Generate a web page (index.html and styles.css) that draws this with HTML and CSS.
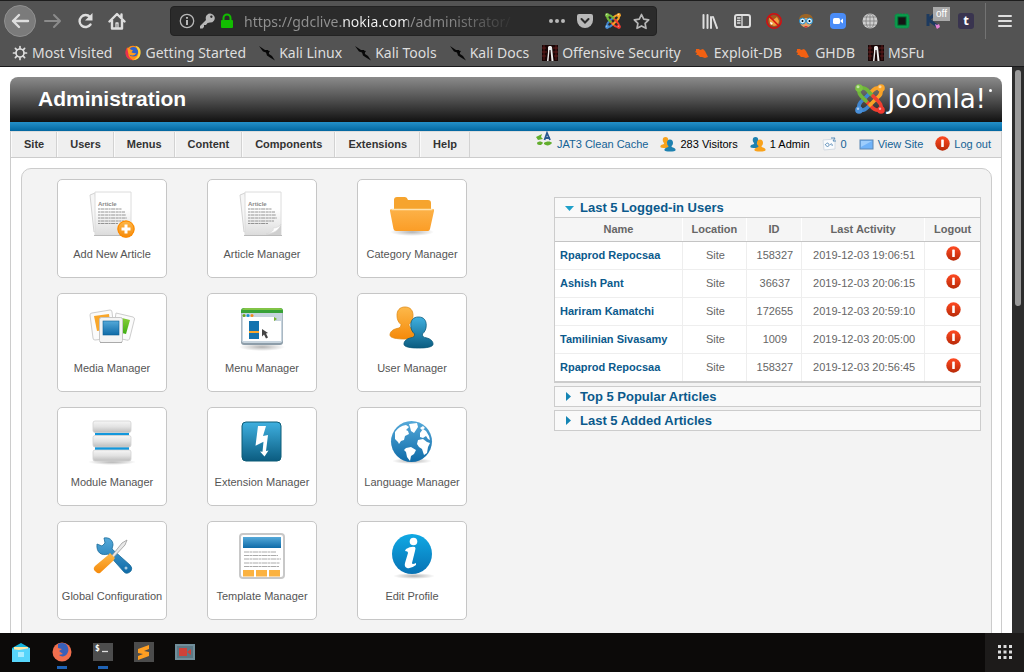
FILE: index.html
```html
<!DOCTYPE html>
<html lang="en">
<head>
<meta charset="utf-8">
<title>Administration</title>
<link rel="stylesheet" href="styles.css">
</head>
<body>
<svg class="defs" width="0" height="0" aria-hidden="true">
  <defs>
    <linearGradient id="gBlue" x1="0" y1="0" x2="0" y2="1"><stop offset="0" stop-color="#3fb0e0"/><stop offset="1" stop-color="#0b5c80"/></linearGradient>
    <linearGradient id="gSky" x1="0" y1="0" x2="0" y2="1"><stop offset="0" stop-color="#55a9d9"/><stop offset="1" stop-color="#0f6ba8"/></linearGradient>
    <linearGradient id="gInfo" x1="0" y1="0" x2="0" y2="1"><stop offset="0" stop-color="#10a9e4"/><stop offset="1" stop-color="#0872b4"/></linearGradient>
    <linearGradient id="gOrange" x1="0" y1="0" x2="0" y2="1"><stop offset="0" stop-color="#fdb94b"/><stop offset="1" stop-color="#f58a0a"/></linearGradient>
    <linearGradient id="gFold" x1="0" y1="0" x2="0" y2="1"><stop offset="0" stop-color="#fcb249"/><stop offset="1" stop-color="#fb9d26"/></linearGradient>
    <linearGradient id="gRed" x1="0" y1="0" x2="0" y2="1"><stop offset="0" stop-color="#ff4a22"/><stop offset="1" stop-color="#b82a08"/></linearGradient>
    <linearGradient id="gPaper" x1="0" y1="0" x2="0" y2="1"><stop offset="0.4" stop-color="#fff"/><stop offset="1" stop-color="#dcdcdc"/></linearGradient>
    <linearGradient id="gSilver" x1="0" y1="0" x2="0" y2="1"><stop offset="0" stop-color="#f6f6f6"/><stop offset="0.5" stop-color="#e2e2e2"/><stop offset="1" stop-color="#bdbdbd"/></linearGradient>
    <linearGradient id="gGreen" x1="0" y1="0" x2="0" y2="1"><stop offset="0" stop-color="#8ccf3c"/><stop offset="1" stop-color="#3fae12"/></linearGradient>
    <radialGradient id="gShade"><stop offset="0" stop-color="#000" stop-opacity=".3"/><stop offset="1" stop-color="#000" stop-opacity="0"/></radialGradient>
    <symbol id="joomla" viewBox="0 0 30 30">
      <g fill="none" stroke-width="3.700" stroke-linecap="round">
        <path stroke="#3f86cf" d="M4 26C3 21 5 18 8 16L15 9M4 26C9 27 11 25 14 22L15 21"/>
        <path stroke="#f0402f" d="M26 26C21 27 18 25 16 22L9 15M26 26C27 21 25 19 22 16L21 15"/>
        <path stroke="#f9a226" d="M26 4C27 9 25 12 22 14L15 21M26 4C21 3 19 5 16 8L15 9"/>
        <path stroke="#6fb63a" d="M4 4C3 9 5 11 8 14L11 17M4 4C9 3 12 5 14 8L17 11"/>
        <path stroke="#f0402f" d="M22 16L18 12"/>
      </g>
      <circle cx="4" cy="4" r="3.800" fill="#7cc243"/><circle cx="26" cy="4" r="3.800" fill="#fba62b"/><circle cx="26" cy="26" r="3.800" fill="#f23a30"/><circle cx="4" cy="26" r="3.800" fill="#4a90d9"/>
      <g fill="#fff" fill-opacity=".55"><circle cx="3" cy="2.800" r="1.500"/><circle cx="25" cy="2.800" r="1.500"/><circle cx="25" cy="24.800" r="1.200"/><circle cx="3" cy="24.800" r="1.200"/></g>
    </symbol>
    <symbol id="stop" viewBox="0 0 15 15"><circle cx="7.500" cy="7.500" r="7.200" fill="url(#gRed)"/><rect x="6.200" y="3.500" width="2.600" height="7.600" rx="0.600" fill="#fff"/></symbol>
    <symbol id="person" viewBox="0 0 32 34"><path d="M16 1c5.500 0 8 3.500 8 8.500 0 4-1.500 7-4 9 0 2.500 1 3.500 4 4 4.500 1 7 3.500 7 6.500 0 3-7 4-15 4S1 32 1 29c0-3 2.500-5.500 7-6.500 3-.5 4-1.500 4-4-2.500-2-4-5-4-9C8 4.500 10.500 1 16 1z"/></symbol>
    <symbol id="kali" viewBox="0 0 16 16"><path fill="#080808" d="M0 1l6 4 3 0 1 4 3 2 3 4.500-5-3-3-2-1-3-3-1z"/><path fill="#080808" d="M5 5l6 1-2 3z"/></symbol>
    <symbol id="offsec" viewBox="0 0 16 16"><path fill="#180606" d="M0 0h16v16H0z"/><path stroke="#5c1b1b" d="M0 3h4M0 7h5M0 11h4M11 3h5M11 7h5M12 11h4M2 0v15M14 0v15"/><path fill="#eee" d="M6 2l1-1h2l1 1 .5 5 1 9H9.500L8.500 5 7.500 5 6.500 16H5L6 7z"/></symbol>
    <symbol id="bug" viewBox="0 0 16 16"><path fill="#f26012" d="M2 4l3 0 1 1 3-1 2 2 1 2 2 4-3 1-3-1-2 0-2-2-2 0 1-2-2-1 1-1z"/></symbol>
    <symbol id="fox" viewBox="0 0 20 20"><circle cx="10" cy="10" r="9" fill="#ff8c18"/><circle cx="10.500" cy="8.500" r="6" fill="#2f62c9"/><path fill="#ff9a1c" d="M3 3c-1 4 1 10 6 10 3 0 4-1 5-3-2 1-4 0-6-1l2-2-4-2z"/><path fill="#ffd33d" d="M13 1c5 1 7 5 6.500 9-.5 6-5 9-10 9 5-2 8-6 7-11-.5-3-2-5-3.500-7z"/><path fill="#e8304c" d="M2.500 3c-5 8 0 16 7.500 16-4-2-6-5-6-9z"/></symbol>
    <symbol id="paper" viewBox="0 0 48 48">
      <path d="M2 5l5-2 4 37-5 2z" fill="#f6f6f6" stroke="#d4d4d4"/>
      <path d="M7 2h36v43H7z" fill="url(#gPaper)" stroke="#dcdcdc"/><path d="M6 45.500h38" stroke="#bbb"/>
      <text class="paper-title" x="10" y="16">Article</text>
      <path d="M10 19h24M10 22h27M10 25h28M10 28h29M10 31h26M10 33.500h20" stroke="#888" stroke-width=".9" stroke-dasharray="2 .5 4 .6 3 .5"/>
    </symbol>
  </defs>
</svg>

<header class="browser">
  <div class="toolbar">
    <button class="tool back" aria-label="Back"><svg width="20" height="20" viewBox="0 0 20 20"><path d="M18 10H3M9 4l-6 6 6 6" class="line bold"/></svg></button>
    <button class="tool dim" aria-label="Forward"><svg width="20" height="20" viewBox="0 0 20 20"><path d="M2 10h14M11 4l6 6-6 6" class="line"/></svg></button>
    <button class="tool" aria-label="Reload"><svg width="18" height="18" viewBox="0 0 18 18"><path d="M14.500 12.500A6 6 0 1 1 14 5" class="line bold"/><path d="M16.500 1v7.500H9z" fill="currentColor"/></svg></button>
    <button class="tool" aria-label="Home"><svg width="18" height="18" viewBox="0 0 18 18"><path d="M1.500 9.500L9 2l7.500 7.500M4 8v8.500h10V8M13.500 2.500V6" class="line bold"/><path d="M8 16v-5h2v5" class="line thin"/></svg></button>
    <div class="urlbar">
      <button class="small" aria-label="Site information"><svg width="16" height="16" viewBox="0 0 16 16"><circle cx="8" cy="8" r="6.700" class="line thin"/><path d="M7 7h2v5H7zM7 4h2v1.800H7z" fill="currentColor"/></svg></button>
      <button class="small" aria-label="Saved login"><svg width="16" height="16" viewBox="0 0 16 16"><path fill="currentColor" fill-rule="evenodd" d="M8 2a4.500 4.500 0 1 1 3 7.600L8.600 10 7 12H5v2l-1.500 1.500H1V13l6-6c-.6-2-.2-4 1-5zm4.300.5a1.200 1.200 0 1 0 .1 2.400 1.200 1.200 0 0 0-.1-2.400z"/></svg></button>
      <button class="small lock" aria-label="Secure connection"><svg width="14" height="16" viewBox="0 0 14 16"><path d="M3.500 8V5a3.500 3.500 0 0 1 7 0v3" fill="none" stroke="currentColor" stroke-width="2"/><rect x="1" y="7" width="12" height="8" rx="1" fill="currentColor"/></svg></button>
      <input class="url" type="text" aria-label="Address" value="https://gdclive.nokia.com/administrator/">
      <button class="mid" aria-label="Page actions"><svg width="16" height="16" viewBox="0 0 16 16" fill="currentColor"><circle cx="2" cy="8" r="2"/><circle cx="8" cy="8" r="2"/><circle cx="14" cy="8" r="2"/></svg></button>
      <button class="mid" aria-label="Save to Pocket"><svg width="16" height="16" viewBox="0 0 16 16"><path d="M2 1h12a2 2 0 0 1 2 2v4a8 8 0 0 1-16 0V3a2 2 0 0 1 2-2z" fill="currentColor"/><path d="M4.500 6L8 9.500 11.500 6" fill="none" stroke="#2b2b2b" stroke-width="2" stroke-linecap="round"/></svg></button>
      <button class="mid" aria-label="Joomla extension"><svg width="16" height="16"><use href="#joomla"/></svg></button>
      <button class="mid" aria-label="Bookmark this page"><svg width="17" height="17" viewBox="0 0 17 17"><path d="M8.500 1.500l2.200 4.600 5 .7-3.600 3.500.9 5-4.500-2.400L4 15.300l.9-5L1.300 6.800l5-.7z" class="line mids"/></svg></button>
    </div>
    <button class="tool" aria-label="Library"><svg width="16" height="16" viewBox="0 0 16 16"><path d="M1.500 2v13M5.500 2v13M9 4v11M11 4l4 11" class="line"/></svg></button>
    <button class="tool" aria-label="Sidebar"><svg width="17" height="16" viewBox="0 0 17 16"><rect x="1" y="2" width="15" height="12" rx="2" class="line"/><path d="M8 2v12M3.500 5h2.500M3.500 7.500h2.500M3.500 10h2.500" class="line thin"/></svg></button>
    <button class="tool" aria-label="Proxy disabled"><svg width="16" height="16" viewBox="0 0 16 16"><circle cx="8" cy="8" r="6" fill="#a9561d"/><path fill="#f0a041" d="M3 5l4 2 4-3 2 4-1 4-4 1-4-2z"/><path fill="#fff" d="M4 9l3 1-2 2z"/><circle cx="8" cy="8" r="7.200" fill="none" stroke="#d90d0d" stroke-width="1.500"/><path d="M3 3l10 10" stroke="#d90d0d" stroke-width="1.500"/></svg></button>
    <button class="tool" aria-label="User profile"><svg width="16" height="16" viewBox="0 0 16 16"><circle cx="8" cy="8.500" r="6" fill="#e3a468"/><path fill="#9b6426" d="M1 7c0-4 3-6 7-6s7 2 7 6l-3-2H4z"/><path d="M6 13h4l-2 2z" fill="#d33"/><circle cx="4.500" cy="8" r="3" fill="#d5f0ff" stroke="#1d89c8"/><circle cx="11.500" cy="8" r="3" fill="#d5f0ff" stroke="#1d89c8"/><circle cx="4.500" cy="8" r="1"/><circle cx="11.500" cy="8" r="1"/></svg></button>
    <button class="tool" aria-label="Meetings"><svg width="16" height="16" viewBox="0 0 16 16"><rect width="16" height="16" rx="4" fill="#4a8cf7"/><rect x="3" y="5" width="7" height="6" rx="1.500" fill="#fff"/><path d="M10.500 7.500L13 5.500v5l-2.500-2z" fill="#fff"/></svg></button>
    <button class="tool" aria-label="Globe"><svg width="16" height="16" viewBox="0 0 16 16"><circle cx="8" cy="8" r="7.500" fill="#cfcfcf"/><path d="M8 0v16M0 8h16M2 4h12M2 12h12" stroke="#7d7d7d" stroke-width=".8"/><ellipse cx="8" cy="8" rx="4" ry="7.500" fill="none" stroke="#7d7d7d" stroke-width=".8"/></svg></button>
    <button class="tool" aria-label="Chip"><svg width="16" height="16" viewBox="0 0 16 16"><rect x="1" y="1" width="14" height="14" rx="2" fill="#0a9a4b" stroke="#0b8d46" stroke-dasharray="2 1"/><rect x="4" y="4" width="8" height="8" fill="#151515" stroke="#03552a"/></svg></button>
    <button class="tool badged" aria-label="Blocker off"><svg width="16" height="16" viewBox="0 0 16 16"><path d="M2 1v12M2 7l7-6M3 7l8 6" stroke="#1d3a5f" stroke-width="3" fill="none"/><path d="M9 11l2 1 2-1 1 3-3 2-1-2z" fill="#e682d4"/></svg><span class="badge">off</span></button>
    <button class="tool" aria-label="Tumblr"><span class="tile">t</span></button>
    <span class="divider"></span>
    <button class="tool" aria-label="Menu"><svg width="14" height="16" viewBox="0 0 14 16"><path d="M1 3h12M1 8h12M1 13h12" class="line"/></svg></button>
  </div>
  <nav class="bookmarks">
    <a href="#"><svg width="16" height="16" viewBox="0 0 16 16"><circle cx="8" cy="8" r="4" class="line mids"/><path d="M8 1.500v2M8 12.500v2M1.500 8h2M12.500 8h2M3.400 3.400l1.400 1.400M11.200 11.200l1.400 1.400M3.400 12.600l1.400-1.400M11.200 4.800l1.400-1.400" class="line mids"/></svg>Most Visited</a>
    <a href="#"><svg width="16" height="16"><use href="#fox"/></svg>Getting Started</a>
    <a href="#"><svg width="16" height="16"><use href="#kali"/></svg>Kali Linux</a>
    <a href="#"><svg width="16" height="16"><use href="#kali"/></svg>Kali Tools</a>
    <a href="#"><svg width="16" height="16"><use href="#kali"/></svg>Kali Docs</a>
    <a href="#"><svg width="16" height="16"><use href="#offsec"/></svg>Offensive Security</a>
    <a href="#"><svg width="16" height="16"><use href="#bug"/></svg>Exploit-DB</a>
    <a href="#"><svg width="16" height="16"><use href="#bug"/></svg>GHDB</a>
    <a href="#"><svg width="16" height="16"><use href="#offsec"/></svg>MSFu</a>
  </nav>
</header>

<div class="viewport">
  <div class="page">
    <div class="masthead">
      <h1>Administration</h1>
      <div class="brand"><svg width="30" height="30"><use href="#joomla"/></svg><span>Joomla!</span><i></i></div>
    </div>
    <div class="stripe"></div>
    <div class="menubar">
      <nav class="menu"><a href="#">Site</a><a href="#">Users</a><a href="#">Menus</a><a href="#">Content</a><a href="#">Components</a><a href="#">Extensions</a><a href="#">Help</a></nav>
      <div class="status">
        <a href="#"><svg class="raised" width="18" height="18" viewBox="0 0 18 18"><path fill="#62ad2d" d="M1 6l6-3-1 3 2 2-5 1zM2 12c1-2 5-2 6 0l-2 2c-2 0-4 0-4-2zM9 12c2-2 7-2 8 0-2 3-6 3-8 1z"/><path d="M9.500 9l2.500-7 3 7M10 7h5" fill="none" stroke="#27568f" stroke-width="1.800"/></svg>JAT3 Clean Cache</a>
        <span><svg width="16" height="16" viewBox="0 0 16 16"><use href="#person" x="0" y="0" width="11" height="13" fill="#f9a21b"/><use href="#person" x="4" y="3" width="12" height="13" fill="#1d81b0"/></svg>283 Visitors</span>
        <span><svg width="16" height="16" viewBox="0 0 16 16"><use href="#person" x="0" y="0" width="11" height="13" fill="#1d81b0"/><use href="#person" x="4" y="3" width="12" height="13" fill="#f9a21b"/></svg>1 Admin</span>
        <a href="#"><svg width="15" height="16" viewBox="0 0 15 16"><path d="M1 4l12-1v10l-11 1z" fill="#f9fbfd" stroke="#d3dbe3"/><path d="M3 9c2-3 4-2 4 0s-3 2-3 0M8 9c1-2 3-1 2 1M9 2h4l-2 3h3" fill="none" stroke="#5b8db8"/></svg>0</a>
        <a href="#"><svg width="15" height="16" viewBox="0 0 15 16"><rect x="1" y="4" width="13" height="9" fill="#6fb2f8" stroke="#5c87b4"/><path d="M2 5h11L2 11z" fill="#9dcdfc"/></svg>View Site</a>
        <a href="#"><svg width="15" height="15"><use href="#stop"/></svg>Log out</a>
      </div>
    </div>
    <div class="body">
      <main class="panel">
        <div class="cards">
          <a class="card" href="#"><svg width="48" height="48" viewBox="0 0 48 48"><use href="#paper"/><circle cx="38" cy="39" r="8.700" fill="url(#gOrange)"/><circle cx="38" cy="39" r="8" fill="none" stroke="#ff8a00"/><path d="M38 34.500v9M33.500 39h9" stroke="#fff" stroke-width="3"/></svg>Add New Article</a>
          <a class="card" href="#"><svg width="48" height="48" viewBox="0 0 48 48"><use href="#paper"/><path d="M28 45c6-1 12-4 15-11v11z" fill="#cfcfcf"/><path d="M28 44c7-2 8-4 7-6 3 0 6-1 8-4-2 6-6 9-15 10z" fill="#fff" stroke="#d5d5d5" stroke-width=".6"/></svg>Article Manager</a>
          <a class="card" href="#"><svg width="48" height="48" viewBox="0 0 48 48"><ellipse cx="24" cy="42" rx="22" ry="4" fill="url(#gShade)"/><path d="M6 10q0-3 3-3h8q2 0 3 3h20q3 0 3 3v17H6z" fill="#f6a42e"/><path d="M4 19h41q1.500 0 1 2l-4 18q-.5 2-2 2H8q-2 0-2.500-2L2 21q-.5-2 2-2z" fill="url(#gFold)"/><path d="M3.500 19.500h41" stroke="#ffe2ad" stroke-width="1.300"/></svg>Category Manager</a>

          <a class="card" href="#"><svg width="48" height="48" viewBox="0 0 48 48"><g stroke="#cdcdcd" fill="#fbfbfb"><path d="M2 11q0-2 2-2l18-3q2 0 2 2l3 26-20 2q-2 0-2-2z"/><path d="M28 9l17 4q2 1 1.500 2l-5 20q-1 2-3 1l-14-3z"/></g><path d="M6 12l15-2 2 15-14 2z" fill="#f9a72b"/><path d="M30 13l12 3-4 14-12-3z" fill="url(#gGreen)"/><rect x="11.500" y="13.500" width="23" height="25" rx="2" fill="#f4f4f4" stroke="#c6c6c6"/><path d="M12 38.500h22" stroke="#aaa"/><rect x="15" y="17" width="16" height="14" fill="url(#gSky)" stroke="#0d6095" stroke-width=".6"/></svg>Media Manager</a>
          <a class="card" href="#"><svg width="48" height="48" viewBox="0 0 48 48"><ellipse cx="24" cy="43" rx="23" ry="4" fill="url(#gShade)"/><rect x="3" y="5" width="42" height="36" rx="3" fill="#8d9da9"/><rect x="3.500" y="5" width="41" height="34" rx="3" fill="#c7d4de"/><path d="M3 9V7q0-3 3-3h36q3 0 3 3v2z" fill="#38a238"/><path d="M4 6q1-2 3-2h34q3 0 3 2z" fill="#82c447"/><rect x="5" y="13" width="31" height="5" fill="#fff"/><circle cx="6" cy="11.500" r="1.500" fill="#6aa51c"/><circle cx="10" cy="11.500" r="1.500" fill="#188fd0"/><circle cx="14" cy="11.500" r="1.500" fill="#f28a1c"/><path d="M36 13l3 2-3 2z" fill="#77b22c"/><path d="M5 17h38v20H5z" fill="#fff"/><rect x="11" y="17" width="10" height="18" fill="#1373ae"/><rect x="11" y="27" width="10" height="2" fill="#f9a72b"/><path d="M24 25l6 4-2 .5 2 4-2 1-2-4-2 2z" fill="#444"/></svg>Menu Manager</a>
          <a class="card" href="#"><svg width="48" height="48" viewBox="0 0 48 48"><use href="#person" x="1" y="2" width="32" height="34" fill="url(#gOrange)" stroke="#e08a14" stroke-width=".8"/><use href="#person" x="14" y="12" width="33" height="33" fill="url(#gBlue)" stroke="#0b5878" stroke-width=".8"/></svg>User Manager</a>

          <a class="card" href="#"><svg width="48" height="48" viewBox="0 0 48 48"><ellipse cx="24" cy="44" rx="24" ry="3" fill="url(#gShade)"/><path d="M7 12h34v21H7z" fill="#d5d5d5"/><path d="M7 16h34M7 30.500h34" stroke="#1297dc" stroke-width="3"/><g fill="url(#gSilver)" stroke="#d2d2d2" stroke-width=".8"><rect x="5" y="3" width="38" height="11.500" rx="2"/><rect x="5" y="17.500" width="38" height="11.500" rx="2"/><rect x="5" y="32" width="38" height="11" rx="2"/></g></svg>Module Manager</a>
          <a class="card" href="#"><svg width="48" height="48" viewBox="0 0 48 48"><rect x="4" y="4" width="39" height="39" rx="4" fill="url(#gBlue)" stroke="#0c5c77"/><path d="M20 8h8l-3 10 5-1-2 16 2.500-.5-4 6-4.500-5 2.500.3 1-10-8 4z" fill="#fff"/></svg>Extension Manager</a>
          <a class="card" href="#"><svg width="48" height="48" viewBox="0 0 48 48"><ellipse cx="24" cy="43" rx="20" ry="3" fill="url(#gShade)"/><circle cx="23.500" cy="23.500" r="20.500" fill="url(#gSky)"/><g fill="#fff"><path d="M7 14q4-6 11-7l3 2-3 3 2 1 1 3-4 2-1 4-3 1-2 3-1-2-3-3z"/><path d="M21 6l8-1 1 4-4 6-3-2-1-4z"/><path d="M18 30l5-1 5 3-2 4-3 2-1 5-3-4-1-5-2-2z"/><path d="M32 15l3-4 3 2 3 5 1 4-2-1-2-3-3 2-3-1z"/><path d="M30 22l5-1 4 3 3 1-2 4-1 6-3 2-2-6-3-2-2-3z"/><path d="M32 10l3-2 2 2-3 2z"/></g></svg>Language Manager</a>

          <a class="card" href="#"><svg width="48" height="48" viewBox="0 0 48 48"><path d="M9 12l5 2 3-3-1-5c5-1 9 2 9 7l-1 4 18 16q3 3 1 6-4 4-7 1L20 22c-6 2-12-1-11-10z" fill="url(#gSky)" stroke="#1b6c9b" stroke-width=".8"/><circle cx="38" cy="36" r="1.500" fill="#a8cbe0"/><path d="M22 26L34 11l5-3-2 5-13 14z" fill="#e8e8e8" stroke="#999" stroke-width=".8"/><path d="M19 24l3-3 5 5-2 3-13 12q-2 1-4-1l-2-2q-1-2 1-4z" fill="url(#gOrange)"/></svg>Global Configuration</a>
          <a class="card" href="#"><svg width="48" height="48" viewBox="0 0 48 48"><rect x="2" y="2" width="44" height="44" rx="3" fill="#fff" stroke="#c8c8c8" stroke-width="2"/><rect x="5" y="5" width="38" height="11" fill="url(#gSky)"/><path d="M6 20h32M6 23.500h34M6 27h37M6 31h36M6 34.500h35" stroke="#aaa" stroke-dasharray="5 .5 3 .5"/><path d="M5 38h11v6.500H5zM18 38h11v6.500H18zM31 38h11v6.500H31z" fill="#fbb240"/></svg>Template Manager</a>
          <a class="card" href="#"><svg width="48" height="48" viewBox="0 0 48 48"><ellipse cx="26" cy="44" rx="21" ry="3" fill="url(#gShade)"/><circle cx="24" cy="22" r="20" fill="url(#gInfo)"/><circle cx="25.500" cy="9.500" r="3.800" fill="#fff"/><path d="M18 17q5-3 9-2 1 1 0 4l-3 12q0 2 4 0l0 2q-5 4-9 3-3-1-2-5l3-10q0-2-3-2z" fill="#fff"/></svg>Edit Profile</a>
        </div>

        <div class="panes">
          <section class="pane open">
            <h2><svg width="10" height="10" viewBox="0 0 10 10"><path d="M1 3h9L5.500 8z" fill="#1fa0c9"/></svg>Last 5 Logged-in Users</h2>
            <table>
              <colgroup><col class="c-name"><col class="c-loc"><col class="c-id"><col class="c-act"><col class="c-out"></colgroup>
              <thead><tr><th>Name</th><th>Location</th><th>ID</th><th>Last Activity</th><th>Logout</th></tr></thead>
              <tbody>
                <tr><td><a href="#">Rpaprod Repocsaa</a></td><td>Site</td><td>158327</td><td>2019-12-03 19:06:51</td><td><button aria-label="Log out user"><svg width="15" height="15"><use href="#stop"/></svg></button></td></tr>
                <tr><td><a href="#">Ashish Pant</a></td><td>Site</td><td>36637</td><td>2019-12-03 20:06:15</td><td><button aria-label="Log out user"><svg width="15" height="15"><use href="#stop"/></svg></button></td></tr>
                <tr><td><a href="#">Hariram Kamatchi</a></td><td>Site</td><td>172655</td><td>2019-12-03 20:59:10</td><td><button aria-label="Log out user"><svg width="15" height="15"><use href="#stop"/></svg></button></td></tr>
                <tr><td><a href="#">Tamilinian Sivasamy</a></td><td>Site</td><td>1009</td><td>2019-12-03 20:05:00</td><td><button aria-label="Log out user"><svg width="15" height="15"><use href="#stop"/></svg></button></td></tr>
                <tr><td><a href="#">Rpaprod Repocsaa</a></td><td>Site</td><td>158327</td><td>2019-12-03 20:56:45</td><td><button aria-label="Log out user"><svg width="15" height="15"><use href="#stop"/></svg></button></td></tr>
              </tbody>
            </table>
          </section>
          <section class="pane"><h2><svg width="10" height="10" viewBox="0 0 10 10"><path d="M2 0l5 4.500L2 9z" fill="#1485b4"/></svg>Top 5 Popular Articles</h2></section>
          <section class="pane"><h2><svg width="10" height="10" viewBox="0 0 10 10"><path d="M2 0l5 4.500L2 9z" fill="#1485b4"/></svg>Last 5 Added Articles</h2></section>
        </div>
      </main>
    </div>
  </div>
  <div class="scrollbar"><div class="thumb"></div></div>
</div>

<footer class="taskbar">
  <button aria-label="Files"><svg width="20" height="20" viewBox="0 0 20 20"><path d="M1 6l9-5 9 5v3H1z" fill="#16b3dc"/><path d="M3 5h14v6H3z" fill="#ffe9a5"/><path d="M1 7l7 1 11-2v14H1z" fill="#57d5fb"/><path d="M7 10h6v5H7z" fill="#a7ecff"/></svg></button>
  <button class="running" aria-label="Firefox"><svg width="20" height="20" viewBox="0 0 20 20"><circle cx="10" cy="10" r="9.500" fill="#f16f4e"/><path fill="#3960ba" d="M6 2q4-2 8 0c3 4 3 7 1 10-2 3-6 3-8 1l4-1-4-3 3-2-4-1z"/></svg></button>
  <button class="running" aria-label="Terminal"><svg width="20" height="20" viewBox="0 0 20 20"><path fill="#4d4d4d" d="M0 1h20v18H0z"/><text class="prompt" x="2" y="9">$</text><path d="M9 9.500h6" stroke="#ddd" stroke-width="1.300"/></svg></button>
  <button aria-label="Sublime Text"><svg width="20" height="20" viewBox="0 0 20 20"><path fill="#4c4c4c" d="M0 0h20v20H0z"/><path fill="#ff9f22" d="M4 7l11-4v4l-5 2 5 1v4L4 18v-4l5-2-5-1z"/></svg></button>
  <button aria-label="Screen recorder"><svg width="20" height="20" viewBox="0 0 20 20"><path fill="#718e9a" d="M0 2h20v16H0z"/><path fill="#5d7884" d="M2 4h16v12H2z"/><path fill="#ce4239" d="M4 6h8v8H4zM12 10l4-3v6z"/></svg></button>
  <button class="apps" aria-label="Show applications"><svg width="16" height="16" viewBox="0 0 16 16"><path d="M1 2.500h14M1 8h14M1 13.500h14" stroke="#ddd" stroke-width="3" stroke-dasharray="3 2.500"/></svg></button>
</footer>
</body>
</html>
```
FILE: styles.css
```css
* { box-sizing: border-box; }

body {
  margin: 0;
  height: 100vh;
  display: flex;
  flex-direction: column;
  overflow: hidden;
  background: #fff;
  font: 11px/14px "Liberation Sans", Arial, sans-serif;
}

.defs { position: absolute; }
svg { display: block; flex: none; }
a { color: inherit; text-decoration: none; }
button { border: 0; padding: 0; background: none; color: inherit; display: flex; align-items: center; justify-content: center; flex: none; }

.line { fill: none; stroke: currentColor; stroke-width: 2; stroke-linecap: round; stroke-linejoin: round; }
.line.thin { stroke-width: 1.3; }
.line.mids { stroke-width: 1.7; }
.line.bold { stroke-width: 2.4; }

/* Browser chrome */
.browser {
  flex: none;
  background: #535353;
  color: #dedede;
  border-top: 1px solid #1d1d1d;
  border-bottom: 1px solid #19191b;
  font: 14px/20px "Noto Sans", sans-serif;
}
.toolbar { display: flex; align-items: center; height: 40px; padding: 0 3px 0 4px; }
.tool { width: 32px; height: 32px; }
.tool.back { background: #7b7b7b; border: 1px solid #909090; border-radius: 16px; margin-right: 1px; }
.tool.dim { color: #8b8b8b; }
.urlbar {
  flex: 1;
  display: flex;
  align-items: center;
  height: 30px;
  margin: 0 37px;
  padding: 0 1px 0 6px;
  background: #2b2b2b;
  border: 1px solid #222;
  border-radius: 4px;
  color: #b8b8b8;
}
.small { width: 20px; height: 28px; }
.mid { width: 28px; height: 28px; }
.lock { color: #12bc00; }
.url {
  flex: 1;
  min-width: 0;
  height: 28px;
  margin: 0 0 0 7px;
  padding: 0;
  border: 0;
  outline: 0;
  font: inherit;
  color: #f4f4f4;
  -webkit-text-fill-color: transparent;
  background: linear-gradient(90deg, #929292 97px, #f4f4f4 97px, #f4f4f4 163px, #929292 163px, #858585 210px, #2b2b2b 272px);
  -webkit-background-clip: text;
  background-clip: text;
}
.badged { position: relative; }
.badge {
  position: absolute;
  left: 15px;
  top: 2px;
  width: 17px;
  height: 14px;
  background: #aaa;
  color: #fff;
  font-size: 10px;
  line-height: 13px;
  text-align: center;
}
.tile { width: 16px; height: 16px; border-radius: 3px; background: #39344f; color: #fff; font: bold 13px/15px "Noto Sans", sans-serif; }
.divider { width: 1px; height: 36px; margin: 0 3px; background: #737373; }
.bookmarks { display: flex; align-items: center; gap: 13px; height: 25px; padding: 0 12px 2px; white-space: nowrap; }
.bookmarks a { display: flex; align-items: center; gap: 4px; }

/* Web page */
.viewport { flex: 1; min-height: 0; display: flex; overflow: hidden; }
.page { flex: 1; min-width: 0; display: flex; flex-direction: column; padding: 10px 10px 0; }
.masthead {
  flex: none;
  display: flex;
  align-items: center;
  justify-content: space-between;
  height: 45px;
  padding: 0 10px 0 28px;
  border-radius: 8px 8px 0 0;
  background: linear-gradient(#8b8b8b, #505050 50%, #111);
  color: #fff;
}
.masthead h1 { margin: 0; padding-bottom: 2px; font-size: 21px; line-height: 24px; }
.brand { display: flex; align-items: center; gap: 3px; padding-bottom: 2px; }
.brand span { font: 26px/30px "DejaVu Sans", sans-serif; }
.brand i { width: 3px; height: 3px; margin-bottom: 16px; border-radius: 2px; background: #fff; }
.stripe { flex: none; height: 9px; background: linear-gradient(#2390c9, #0367a0); }
.menubar {
  flex: none;
  display: flex;
  justify-content: space-between;
  height: 27px;
  border: 1px solid #ccc;
  border-top-color: #ddd;
  background: #efefef;
}
.menu { display: flex; }
.menu a {
  padding: 0 12px;
  line-height: 25px;
  font-weight: bold;
  color: #333;
  border-left: 1px solid #fafafa;
  border-right: 1px solid #d2d2d2;
}
.status { display: flex; align-items: center; gap: 12px; padding: 0 10px 2px 0; color: #000; white-space: nowrap; }
.status a, .status span { display: flex; align-items: center; gap: 4px; }
.status a { color: #146295; }
.status .raised { margin-bottom: 8px; }

.body { flex: 1; min-height: 0; padding: 10px 9px 0 10px; border: solid #ccc; border-width: 0 1px; }
.panel {
  display: flex;
  align-items: flex-start;
  justify-content: space-between;
  padding: 10px 10px 40px 35px;
  border: 1px solid #ccc;
  border-radius: 10px;
  background: #f3f3f3;
}
.cards { display: grid; grid-template-columns: repeat(3, 110px); gap: 15px 40px; }
.card {
  display: flex;
  flex-direction: column;
  align-items: center;
  gap: 9px;
  height: 99px;
  padding-top: 10px;
  border: 1px solid #c6c6c6;
  border-radius: 5px;
  background: #fff;
  color: #555;
  white-space: nowrap;
}
.paper-title { font: bold 6px "Liberation Sans", sans-serif; fill: #888; }

.panes { width: 44%; padding-top: 18px; display: flex; flex-direction: column; gap: 3px; min-width: 427px; }
.pane { border: 1px solid #ccc; background: #f9f9f9; }
.pane.open { border-bottom: 2px solid #ccc; }
.pane h2 { display: flex; align-items: center; gap: 6px; height: 19px; margin: 0; padding-left: 9px; font-size: 13px; line-height: 19px; color: #0b5a8c; }
.open h2 { height: 20px; border-bottom: 1px solid #ccc; }
table { width: 100%; table-layout: fixed; border-collapse: collapse; background: #fff; color: #666; text-align: center; }
.c-name { width: 30%; }
.c-loc { width: 15%; }
.c-id { width: 13%; }
.c-act { width: 29%; }
.c-out { width: 13%; }
th { height: 23px; padding: 0; background: #f5f5f5; border-right: 1px solid #fff; border-bottom: 1px solid #c4c4c4; }
td { height: 28px; padding: 0 0 0 2px; border-right: 1px solid #eee; border-bottom: 1px solid #eee; }
td:first-child { padding-left: 5px; text-align: left; font-weight: bold; color: #0b5a8c; }
td:last-child, th:last-child { border-right: 0; }
td:last-child { padding-bottom: 3px; }
tbody tr:last-child td { border-bottom: 0; }
td button { margin: 0 auto; }

.scrollbar { width: 12px; padding: 3px 3px 0; background: #2d2d2d; }
.thumb { height: 42%; border-radius: 3px; background: #9a9a9a; }

/* Desktop panel */
.taskbar { flex: none; display: flex; height: 39px; background: #0c0a09; }
.taskbar button { width: 41px; height: 39px; padding-bottom: 1px; }
.taskbar .running { background: linear-gradient(#1f62b4, #1f62b4) 50% 36px / 10px 3px no-repeat; background-position-y: 33px; }
.taskbar .apps { width: 39px; margin-left: auto; background: #1d1b1a; }
.prompt { font: bold 8px "DejaVu Sans Mono", monospace; fill: #fff; }
```
